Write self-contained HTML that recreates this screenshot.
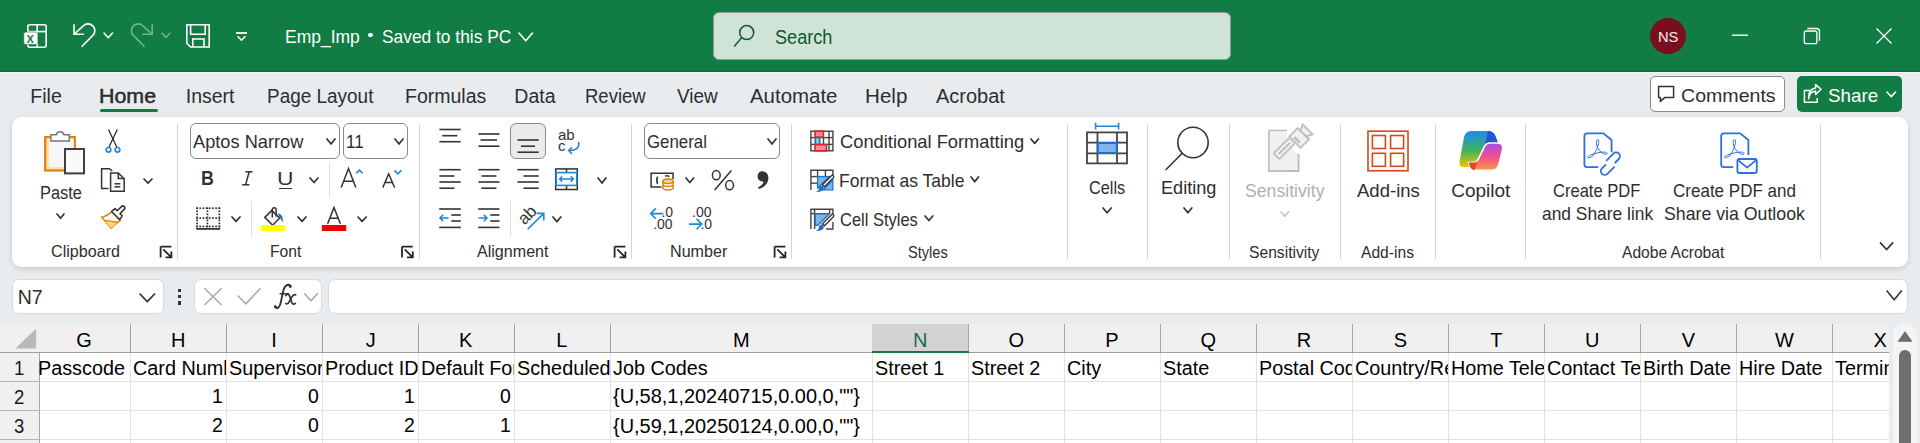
<!DOCTYPE html><html><head><meta charset="utf-8"><style>
html,body{margin:0;padding:0;width:1920px;height:443px;overflow:hidden;background:#E8ECEF}
body{position:relative;font-family:"Liberation Sans",sans-serif}
.t{position:absolute;white-space:nowrap;line-height:normal;transform-origin:0 0;font-family:"Liberation Sans",sans-serif}
.r{position:absolute;display:block}
</style></head><body>
<div class="r" style="left:0px;top:0px;width:1920px;height:72px;background:#117C43"></div>
<div class="r" style="left:0px;top:71px;width:1920px;height:1px;background:#0B6F38"></div>
<div class="r" style="left:0px;top:72px;width:1920px;height:1px;background:#F3F5F8"></div>
<div class="r" style="left:0px;top:73px;width:1920px;height:370px;background:#E8ECEF"></div>
<div class="r" style="left:713px;top:12px;width:518px;height:48px;background:#CFE3D6;border:1px solid #959595;border-radius:6px;box-sizing:border-box"></div>
<div class="t" style="left:774.78px;top:25.80px;font-size:20px;color:#0E5A2E;transform:scaleX(0.9067);">Search</div>
<div class="t" style="left:284.90px;top:25.91px;font-size:19px;color:#FFFFFF;transform:scaleX(0.9198);">Emp_Imp</div>
<div class="r" style="left:368.3px;top:33px;width:4.4px;height:4.4px;background:#fff;border-radius:50%"></div>
<div class="t" style="left:381.92px;top:25.91px;font-size:19px;color:#FFFFFF;transform:scaleX(0.9133);">Saved to this PC</div>
<div class="r" style="left:1650px;top:18px;width:36px;height:36px;background:#7A0E1F;border-radius:50%"></div>
<div class="t" style="left:1657.83px;top:27.97px;font-size:15.5px;color:#F4E9EC;transform:scaleX(0.9473);">NS</div>
<div class="t" style="left:30.33px;top:85.25px;font-size:19.5px;color:#2E2E2E;">File</div>
<div class="t" style="left:99.29px;top:85.25px;font-size:19.5px;color:#2E2E2E;transform:scaleX(1.0963);-webkit-text-stroke:0.45px #242424;">Home</div>
<div class="t" style="left:185.74px;top:85.25px;font-size:19.5px;color:#2E2E2E;">Insert</div>
<div class="t" style="left:266.98px;top:85.25px;font-size:19.5px;color:#2E2E2E;transform:scaleX(0.9719);">Page Layout</div>
<div class="t" style="left:405.04px;top:85.25px;font-size:19.5px;color:#2E2E2E;">Formulas</div>
<div class="t" style="left:514.34px;top:85.25px;font-size:19.5px;color:#2E2E2E;">Data</div>
<div class="t" style="left:585.22px;top:85.25px;font-size:19.5px;color:#2E2E2E;transform:scaleX(0.9487);">Review</div>
<div class="t" style="left:677.21px;top:85.25px;font-size:19.5px;color:#2E2E2E;transform:scaleX(0.9707);">View</div>
<div class="t" style="left:749.50px;top:85.25px;font-size:19.5px;color:#2E2E2E;transform:scaleX(1.0474);">Automate</div>
<div class="t" style="left:864.85px;top:85.25px;font-size:19.5px;color:#2E2E2E;transform:scaleX(1.0574);">Help</div>
<div class="t" style="left:936.30px;top:85.25px;font-size:19.5px;color:#2E2E2E;transform:scaleX(1.0256);">Acrobat</div>
<div class="r" style="left:100px;top:109px;width:58px;height:3px;background:#117C43;border-radius:2px"></div>
<div class="r" style="left:1650px;top:76px;width:135px;height:36px;background:#fff;border:1px solid #8a8a8a;border-radius:5px;box-sizing:border-box"></div>
<div class="t" style="left:1681.02px;top:84.66px;font-size:18.5px;color:#2E2E2E;transform:scaleX(1.0583);">Comments</div>
<div class="r" style="left:1797px;top:76px;width:105px;height:36px;background:#117C43;border-radius:5px"></div>
<div class="t" style="left:1827.75px;top:84.66px;font-size:18.5px;color:#fff;transform:scaleX(1.0160);">Share</div>
<div class="r" style="left:12px;top:117px;width:1896px;height:150px;background:#fff;border-radius:9px;box-shadow:0 2px 5px rgba(0,0,0,0.15)"></div>
<div class="r" style="left:177px;top:124px;width:1px;height:135px;background:#D4D4D4"></div>
<div class="r" style="left:419px;top:124px;width:1px;height:135px;background:#D4D4D4"></div>
<div class="r" style="left:631px;top:124px;width:1px;height:135px;background:#D4D4D4"></div>
<div class="r" style="left:791px;top:124px;width:1px;height:135px;background:#D4D4D4"></div>
<div class="r" style="left:1067px;top:124px;width:1px;height:135px;background:#D4D4D4"></div>
<div class="r" style="left:1147px;top:124px;width:1px;height:135px;background:#D4D4D4"></div>
<div class="r" style="left:1229px;top:124px;width:1px;height:135px;background:#D4D4D4"></div>
<div class="r" style="left:1340px;top:124px;width:1px;height:135px;background:#D4D4D4"></div>
<div class="r" style="left:1435px;top:124px;width:1px;height:135px;background:#D4D4D4"></div>
<div class="r" style="left:1525px;top:124px;width:1px;height:135px;background:#D4D4D4"></div>
<div class="r" style="left:1820px;top:124px;width:1px;height:135px;background:#D4D4D4"></div>
<div class="t" style="left:50.69px;top:241.87px;font-size:16.5px;color:#2E2E2E;transform:scaleX(0.9764);">Clipboard</div>
<div class="t" style="left:269.75px;top:241.87px;font-size:16.5px;color:#2E2E2E;transform:scaleX(0.9494);">Font</div>
<div class="t" style="left:477.40px;top:241.87px;font-size:16.5px;color:#2E2E2E;transform:scaleX(0.9746);">Alignment</div>
<div class="t" style="left:669.71px;top:241.87px;font-size:16.5px;color:#2E2E2E;transform:scaleX(0.9757);">Number</div>
<div class="t" style="left:907.84px;top:243.07px;font-size:16.5px;color:#2E2E2E;transform:scaleX(0.8845);">Styles</div>
<div class="t" style="left:1248.90px;top:243.07px;font-size:16.5px;color:#2E2E2E;transform:scaleX(0.9482);">Sensitivity</div>
<div class="t" style="left:1360.80px;top:243.07px;font-size:16.5px;color:#2E2E2E;transform:scaleX(0.9466);">Add-ins</div>
<div class="t" style="left:1621.80px;top:243.07px;font-size:16.5px;color:#2E2E2E;transform:scaleX(0.9449);">Adobe Acrobat</div>
<div class="t" style="left:39.89px;top:182.71px;font-size:18px;color:#2E2E2E;transform:scaleX(0.9076);">Paste</div>
<div class="t" style="left:1088.69px;top:177.71px;font-size:18px;color:#2E2E2E;transform:scaleX(0.9034);">Cells</div>
<div class="t" style="left:1160.55px;top:177.71px;font-size:18px;color:#2E2E2E;transform:scaleX(1.0061);">Editing</div>
<div class="t" style="left:1245.21px;top:180.11px;font-size:19px;color:#B0B0B0;transform:scaleX(0.9298);">Sensitivity</div>
<div class="t" style="left:1357.20px;top:180.11px;font-size:19px;color:#2E2E2E;transform:scaleX(0.9758);">Add-ins</div>
<div class="t" style="left:1451.25px;top:180.11px;font-size:19px;color:#2E2E2E;">Copilot</div>
<div class="t" style="left:1553.47px;top:180.11px;font-size:19px;color:#2E2E2E;transform:scaleX(0.8711);">Create PDF</div>
<div class="t" style="left:1541.70px;top:202.81px;font-size:19px;color:#2E2E2E;transform:scaleX(0.9152);">and Share link</div>
<div class="t" style="left:1672.55px;top:180.11px;font-size:19px;color:#2E2E2E;transform:scaleX(0.8957);">Create PDF and</div>
<div class="t" style="left:1663.60px;top:202.81px;font-size:19px;color:#2E2E2E;transform:scaleX(0.9328);">Share via Outlook</div>
<div class="r" style="left:190px;top:123px;width:150px;height:36px;background:#fff;border:1px solid #8a8a8a;border-radius:6px;box-sizing:border-box"></div>
<div class="t" style="left:193.30px;top:131.16px;font-size:18.5px;color:#2E2E2E;transform:scaleX(0.9847);">Aptos Narrow</div>
<div class="r" style="left:343px;top:123px;width:65px;height:36px;background:#fff;border:1px solid #8a8a8a;border-radius:6px;box-sizing:border-box"></div>
<div class="t" style="left:346.42px;top:131.16px;font-size:18.5px;color:#2E2E2E;transform:scaleX(0.9216);">11</div>
<div class="r" style="left:644px;top:123px;width:136px;height:36px;background:#fff;border:1px solid #8a8a8a;border-radius:6px;box-sizing:border-box"></div>
<div class="t" style="left:646.66px;top:131.16px;font-size:18.5px;color:#2E2E2E;transform:scaleX(0.9098);">General</div>
<div class="t" style="left:839.68px;top:131.16px;font-size:18.5px;color:#2E2E2E;transform:scaleX(0.9892);">Conditional Formatting</div>
<div class="t" style="left:839.20px;top:169.66px;font-size:18.5px;color:#2E2E2E;transform:scaleX(0.9487);">Format as Table</div>
<div class="t" style="left:839.78px;top:208.86px;font-size:18.5px;color:#2E2E2E;transform:scaleX(0.8900);">Cell Styles</div>
<div class="r" style="left:12px;top:279px;width:152px;height:35px;background:#fff;border:1px solid #DADADA;border-radius:6px;box-sizing:border-box"></div>
<div class="t" style="left:17.74px;top:286.35px;font-size:19.5px;color:#2E2E2E;">N7</div>
<div class="r" style="left:194px;top:279px;width:128px;height:35px;background:#fff;border:1px solid #DADADA;border-radius:7px;box-sizing:border-box"></div>
<div class="r" style="left:328px;top:279px;width:1580px;height:35px;background:#fff;border:1px solid #DADADA;border-radius:7px;box-sizing:border-box"></div>
<div class="r" style="left:0px;top:324px;width:1890px;height:119px;background:#fff"></div>
<div class="r" style="left:0px;top:324px;width:1890px;height:29px;background:#F0F0F0"></div>
<div class="r" style="left:0px;top:324px;width:40px;height:119px;background:#F0F0F0"></div>
<div class="r" style="left:130px;top:324px;width:1px;height:28px;background:#A6A6A6"></div>
<div class="r" style="left:226px;top:324px;width:1px;height:28px;background:#A6A6A6"></div>
<div class="r" style="left:322px;top:324px;width:1px;height:28px;background:#A6A6A6"></div>
<div class="r" style="left:418px;top:324px;width:1px;height:28px;background:#A6A6A6"></div>
<div class="r" style="left:514px;top:324px;width:1px;height:28px;background:#A6A6A6"></div>
<div class="r" style="left:610px;top:324px;width:1px;height:28px;background:#A6A6A6"></div>
<div class="r" style="left:872px;top:324px;width:1px;height:28px;background:#A6A6A6"></div>
<div class="r" style="left:872px;top:324px;width:96px;height:28px;background:#D2D2D2"></div>
<div class="r" style="left:968px;top:324px;width:1px;height:28px;background:#A6A6A6"></div>
<div class="r" style="left:1064px;top:324px;width:1px;height:28px;background:#A6A6A6"></div>
<div class="r" style="left:1160px;top:324px;width:1px;height:28px;background:#A6A6A6"></div>
<div class="r" style="left:1256px;top:324px;width:1px;height:28px;background:#A6A6A6"></div>
<div class="r" style="left:1352px;top:324px;width:1px;height:28px;background:#A6A6A6"></div>
<div class="r" style="left:1448px;top:324px;width:1px;height:28px;background:#A6A6A6"></div>
<div class="r" style="left:1544px;top:324px;width:1px;height:28px;background:#A6A6A6"></div>
<div class="r" style="left:1640px;top:324px;width:1px;height:28px;background:#A6A6A6"></div>
<div class="r" style="left:1736px;top:324px;width:1px;height:28px;background:#A6A6A6"></div>
<div class="r" style="left:1832px;top:324px;width:1px;height:28px;background:#A6A6A6"></div>
<div class="r" style="left:1928px;top:324px;width:1px;height:28px;background:#A6A6A6"></div>
<div class="r" style="left:0px;top:352px;width:1890px;height:1px;background:#9E9E9E"></div>
<div class="r" style="left:872px;top:351px;width:97px;height:2px;background:#117C43"></div>
<div class="r" style="left:39px;top:352px;width:1px;height:91px;background:#A6A6A6"></div>
<div class="r" style="left:0px;top:381px;width:40px;height:1px;background:#B4B4B4"></div>
<div class="r" style="left:40px;top:381px;width:1850px;height:1px;background:#E1E1E1"></div>
<div class="r" style="left:0px;top:410px;width:40px;height:1px;background:#B4B4B4"></div>
<div class="r" style="left:40px;top:410px;width:1850px;height:1px;background:#E1E1E1"></div>
<div class="r" style="left:0px;top:439px;width:40px;height:1px;background:#B4B4B4"></div>
<div class="r" style="left:40px;top:439px;width:1850px;height:1px;background:#E1E1E1"></div>
<div class="r" style="left:0px;top:468px;width:40px;height:1px;background:#B4B4B4"></div>
<div class="r" style="left:40px;top:468px;width:1850px;height:1px;background:#E1E1E1"></div>
<div class="r" style="left:130px;top:353px;width:1px;height:90px;background:#E1E1E1"></div>
<div class="r" style="left:226px;top:353px;width:1px;height:90px;background:#E1E1E1"></div>
<div class="r" style="left:322px;top:353px;width:1px;height:90px;background:#E1E1E1"></div>
<div class="r" style="left:418px;top:353px;width:1px;height:90px;background:#E1E1E1"></div>
<div class="r" style="left:514px;top:353px;width:1px;height:90px;background:#E1E1E1"></div>
<div class="r" style="left:610px;top:353px;width:1px;height:90px;background:#E1E1E1"></div>
<div class="r" style="left:872px;top:353px;width:1px;height:90px;background:#E1E1E1"></div>
<div class="r" style="left:968px;top:353px;width:1px;height:90px;background:#E1E1E1"></div>
<div class="r" style="left:1064px;top:353px;width:1px;height:90px;background:#E1E1E1"></div>
<div class="r" style="left:1160px;top:353px;width:1px;height:90px;background:#E1E1E1"></div>
<div class="r" style="left:1256px;top:353px;width:1px;height:90px;background:#E1E1E1"></div>
<div class="r" style="left:1352px;top:353px;width:1px;height:90px;background:#E1E1E1"></div>
<div class="r" style="left:1448px;top:353px;width:1px;height:90px;background:#E1E1E1"></div>
<div class="r" style="left:1544px;top:353px;width:1px;height:90px;background:#E1E1E1"></div>
<div class="r" style="left:1640px;top:353px;width:1px;height:90px;background:#E1E1E1"></div>
<div class="r" style="left:1736px;top:353px;width:1px;height:90px;background:#E1E1E1"></div>
<div class="r" style="left:1832px;top:353px;width:1px;height:90px;background:#E1E1E1"></div>
<div class="r" style="left:1928px;top:353px;width:1px;height:90px;background:#E1E1E1"></div>
<div class="r" style="left:1889px;top:324px;width:31px;height:119px;background:#E8ECEF"></div>
<div class="t" style="left:76.18px;top:328.90px;font-size:20px;color:#000;">G</div>
<div class="t" style="left:171.08px;top:328.90px;font-size:20px;color:#000;">H</div>
<div class="t" style="left:271.30px;top:328.90px;font-size:20px;color:#000;">I</div>
<div class="t" style="left:365.81px;top:328.90px;font-size:20px;color:#000;">J</div>
<div class="t" style="left:458.94px;top:328.90px;font-size:20px;color:#000;">K</div>
<div class="t" style="left:556.17px;top:328.90px;font-size:20px;color:#000;">L</div>
<div class="t" style="left:733.03px;top:328.90px;font-size:20px;color:#000;">M</div>
<div class="t" style="left:913.08px;top:328.90px;font-size:20px;color:#1E6B4A;">N</div>
<div class="t" style="left:1008.59px;top:328.90px;font-size:20px;color:#000;">O</div>
<div class="t" style="left:1105.32px;top:328.90px;font-size:20px;color:#000;">P</div>
<div class="t" style="left:1200.59px;top:328.90px;font-size:20px;color:#000;">Q</div>
<div class="t" style="left:1296.75px;top:328.90px;font-size:20px;color:#000;">R</div>
<div class="t" style="left:1393.64px;top:328.90px;font-size:20px;color:#000;">S</div>
<div class="t" style="left:1490.18px;top:328.90px;font-size:20px;color:#000;">T</div>
<div class="t" style="left:1585.09px;top:328.90px;font-size:20px;color:#000;">U</div>
<div class="t" style="left:1681.68px;top:328.90px;font-size:20px;color:#000;">V</div>
<div class="t" style="left:1775.02px;top:328.90px;font-size:20px;color:#000;">W</div>
<div class="t" style="left:1873.61px;top:328.90px;font-size:20px;color:#000;">X</div>
<div class="t" style="left:13.88px;top:357.05px;font-size:19.5px;color:#1a1a1a;transform:scaleX(0.9500);">1</div>
<div class="t" style="left:14.16px;top:386.05px;font-size:19.5px;color:#1a1a1a;transform:scaleX(0.9500);">2</div>
<div class="t" style="left:14.16px;top:415.05px;font-size:19.5px;color:#1a1a1a;transform:scaleX(0.9500);">3</div>
<div class="t" style="left:14.25px;top:444.05px;font-size:19.5px;color:#1a1a1a;transform:scaleX(0.9500);">4</div>
<div class="r" style="left:39px;top:353px;width:91px;height:28px;overflow:hidden"><div class="t" style="left:-0.88px;top:3.90px;font-size:20px;color:#000;transform:scaleX(0.9900);">Passcode</div></div>
<div class="r" style="left:130px;top:353px;width:96px;height:28px;overflow:hidden"><div class="t" style="left:3.40px;top:3.90px;font-size:20px;color:#000;transform:scaleX(0.9900);">Card Number</div></div>
<div class="r" style="left:226px;top:353px;width:96px;height:28px;overflow:hidden"><div class="t" style="left:3.40px;top:3.90px;font-size:20px;color:#000;transform:scaleX(0.9900);">Supervisor</div></div>
<div class="r" style="left:322px;top:353px;width:96px;height:28px;overflow:hidden"><div class="t" style="left:3.40px;top:3.90px;font-size:20px;color:#000;transform:scaleX(0.9900);">Product ID</div></div>
<div class="r" style="left:418px;top:353px;width:96px;height:28px;overflow:hidden"><div class="t" style="left:3.40px;top:3.90px;font-size:20px;color:#000;transform:scaleX(0.9900);">Default Form</div></div>
<div class="r" style="left:514px;top:353px;width:96px;height:28px;overflow:hidden"><div class="t" style="left:3.40px;top:3.90px;font-size:20px;color:#000;transform:scaleX(0.9900);">Scheduled</div></div>
<div class="r" style="left:610px;top:353px;width:262px;height:28px;overflow:hidden"><div class="t" style="left:3.40px;top:3.90px;font-size:20px;color:#000;transform:scaleX(0.9900);">Job Codes</div></div>
<div class="r" style="left:872px;top:353px;width:96px;height:28px;overflow:hidden"><div class="t" style="left:3.40px;top:3.90px;font-size:20px;color:#000;transform:scaleX(0.9900);">Street 1</div></div>
<div class="r" style="left:968px;top:353px;width:96px;height:28px;overflow:hidden"><div class="t" style="left:3.40px;top:3.90px;font-size:20px;color:#000;transform:scaleX(0.9900);">Street 2</div></div>
<div class="r" style="left:1064px;top:353px;width:96px;height:28px;overflow:hidden"><div class="t" style="left:3.40px;top:3.90px;font-size:20px;color:#000;transform:scaleX(0.9900);">City</div></div>
<div class="r" style="left:1160px;top:353px;width:96px;height:28px;overflow:hidden"><div class="t" style="left:3.40px;top:3.90px;font-size:20px;color:#000;transform:scaleX(0.9900);">State</div></div>
<div class="r" style="left:1256px;top:353px;width:96px;height:28px;overflow:hidden"><div class="t" style="left:3.40px;top:3.90px;font-size:20px;color:#000;transform:scaleX(0.9900);">Postal Code</div></div>
<div class="r" style="left:1352px;top:353px;width:96px;height:28px;overflow:hidden"><div class="t" style="left:3.40px;top:3.90px;font-size:20px;color:#000;transform:scaleX(0.9900);">Country/Region</div></div>
<div class="r" style="left:1448px;top:353px;width:96px;height:28px;overflow:hidden"><div class="t" style="left:3.40px;top:3.90px;font-size:20px;color:#000;transform:scaleX(0.9900);">Home Telephone</div></div>
<div class="r" style="left:1544px;top:353px;width:96px;height:28px;overflow:hidden"><div class="t" style="left:3.40px;top:3.90px;font-size:20px;color:#000;transform:scaleX(0.9900);">Contact Telephone</div></div>
<div class="r" style="left:1640px;top:353px;width:96px;height:28px;overflow:hidden"><div class="t" style="left:3.40px;top:3.90px;font-size:20px;color:#000;transform:scaleX(0.9900);">Birth Date</div></div>
<div class="r" style="left:1736px;top:353px;width:96px;height:28px;overflow:hidden"><div class="t" style="left:3.40px;top:3.90px;font-size:20px;color:#000;transform:scaleX(0.9900);">Hire Date</div></div>
<div class="r" style="left:1832px;top:353px;width:57px;height:28px;overflow:hidden"><div class="t" style="left:3.40px;top:3.90px;font-size:20px;color:#000;transform:scaleX(0.9900);">Termination</div></div>
<div class="r" style="left:130px;top:382px;width:96px;height:28px;overflow:hidden"><div class="t" style="left:82.31px;top:2.90px;font-size:20px;color:#000;transform:scaleX(0.9700);">1</div></div>
<div class="r" style="left:226px;top:382px;width:96px;height:28px;overflow:hidden"><div class="t" style="left:82.11px;top:2.90px;font-size:20px;color:#000;transform:scaleX(0.9700);">0</div></div>
<div class="r" style="left:322px;top:382px;width:96px;height:28px;overflow:hidden"><div class="t" style="left:82.31px;top:2.90px;font-size:20px;color:#000;transform:scaleX(0.9700);">1</div></div>
<div class="r" style="left:418px;top:382px;width:96px;height:28px;overflow:hidden"><div class="t" style="left:82.11px;top:2.90px;font-size:20px;color:#000;transform:scaleX(0.9700);">0</div></div>
<div class="r" style="left:130px;top:411px;width:96px;height:28px;overflow:hidden"><div class="t" style="left:82.40px;top:3.10px;font-size:20px;color:#000;transform:scaleX(0.9700);">2</div></div>
<div class="r" style="left:226px;top:411px;width:96px;height:28px;overflow:hidden"><div class="t" style="left:82.11px;top:3.10px;font-size:20px;color:#000;transform:scaleX(0.9700);">0</div></div>
<div class="r" style="left:322px;top:411px;width:96px;height:28px;overflow:hidden"><div class="t" style="left:82.40px;top:3.10px;font-size:20px;color:#000;transform:scaleX(0.9700);">2</div></div>
<div class="r" style="left:418px;top:411px;width:96px;height:28px;overflow:hidden"><div class="t" style="left:82.31px;top:3.10px;font-size:20px;color:#000;transform:scaleX(0.9700);">1</div></div>
<div class="r" style="left:610px;top:382px;width:1px;height:1px"></div>
<div class="t" style="left:612.70px;top:384.45px;font-size:20.5px;color:#000;transform:scaleX(0.9725);">{U,58,1,20240715,0.00,0,&quot;&quot;}</div>
<div class="t" style="left:612.70px;top:413.65px;font-size:20.5px;color:#000;transform:scaleX(0.9725);">{U,59,1,20250124,0.00,0,&quot;&quot;}</div>
<svg class="r" style="left:0;top:0" width="1920" height="443">
<g fill="none" stroke="#fff" stroke-width="1.6">
<rect x="27.8" y="24.8" width="18.4" height="22.4" rx="2"/>
<line x1="37.2" y1="24.8" x2="37.2" y2="47"/><line x1="28" y1="31.6" x2="46" y2="31.6"/>
</g>
<rect x="23.8" y="32" width="14" height="12.6" rx="2.2" fill="#fff" stroke="#117C43" stroke-width="0.6"/>
<text x="26.6" y="42.6" font-family="Liberation Sans" font-weight="700" font-size="11" fill="#117C43">X</text>
<g fill="none" stroke="#fff" stroke-width="1.6" stroke-linecap="butt">
<path d="M74,24.3 V34.2 H84"/>
<path d="M74.8,33.6 L83.3,25.8 A6.6,6.6 0 0 1 92.8,35.4 L81.6,46.8"/>
</g>
<g fill="none" stroke="#6FB48C" stroke-width="1.6" transform="translate(226.2,0) scale(-1,1)">
<path d="M74,24.3 V34.2 H84"/>
<path d="M74.8,33.6 L83.3,25.8 A6.6,6.6 0 0 1 92.8,35.4 L81.6,46.8"/>
</g>
<g fill="none" stroke="#fff" stroke-width="1.6">
<path d="M186.8,24.8 H209.2 V47 H190.6 L186.8,43.2 Z"/>
<path d="M190.6,24.8 V34.3 H205.2 V24.8"/>
<path d="M192.8,47 V39 H204 V47"/>
<line x1="236" y1="33" x2="247" y2="33" stroke-width="1.8"/>
<path d="M237.6,36.2 L241.5,40.2 L245.4,36.2" stroke-width="1.6"/>
<line x1="1732" y1="35.2" x2="1748" y2="35.2" stroke-width="1.4"/>
<rect x="1804.3" y="31" width="12.6" height="12.6" rx="2.2" stroke-width="1.3"/>
<path d="M1807.3,28.5 H1816.5 A3,3 0 0 1 1819.5,31.5 V40.7" stroke-width="1.3"/>
<path d="M1876.5,28.5 L1891.5,43.5 M1891.5,28.5 L1876.5,43.5" stroke-width="1.4"/>
</g>
<g fill="none" stroke="#0E5A2E" stroke-width="1.5">
<circle cx="746.7" cy="32.6" r="7"/>
<line x1="741.6" y1="37.7" x2="734.2" y2="46.4"/>
</g>
</svg>
<svg class="r" style="left:102px;top:31px" width="12.5" height="8.799999999999997"><path d="M2,2 L6.25,6.799999999999997 L10.5,2" fill="none" stroke="#fff" stroke-width="1.5" stroke-linecap="round" stroke-linejoin="round"/></svg>
<svg class="r" style="left:159.5px;top:31.200000000000003px" width="12.0" height="8.399999999999999"><path d="M2,2 L6.0,6.399999999999999 L10.0,2" fill="none" stroke="#6FB48C" stroke-width="1.5" stroke-linecap="round" stroke-linejoin="round"/></svg>
<svg class="r" style="left:516.5px;top:30.5px" width="17.5" height="11.799999999999997"><path d="M2,2 L8.75,9.799999999999997 L15.5,2" fill="none" stroke="#fff" stroke-width="1.6" stroke-linecap="round" stroke-linejoin="round"/></svg>
<svg class="r" style="left:0;top:0" width="1920" height="443">
<rect x="45.2" y="137.1" width="29.6" height="33.4" fill="#FBE0A0" stroke="#E07F13" stroke-width="2.2"/>
<rect x="48.8" y="138.6" width="24.8" height="28.4" fill="#F7F7F7"/>
<path d="M50.9,141 V134.8 H56.2 A4,4 0 0 1 64,134.8 H69.3 V141 Z" fill="#fff" stroke="#777" stroke-width="1.5"/>
<rect x="65" y="149" width="19" height="24.4" fill="#FAFAFA" stroke="#404040" stroke-width="2"/>
<g stroke="#262626" stroke-width="1.25" fill="none">
<line x1="108.5" y1="129.4" x2="116.7" y2="147"/><line x1="117.3" y1="129.4" x2="109" y2="147"/>
</g>
<g stroke="#1E88D4" stroke-width="1.7" fill="#fff">
<circle cx="108.5" cy="149.8" r="2.3"/><circle cx="117.5" cy="149.8" r="2.3"/>
</g>
<g stroke="#333" stroke-width="1.5" fill="none">
<path d="M108.5,188.4 H101.6 V168.7 H109.4 L112.2,170.8"/>
<path d="M110.6,191.2 V173 H118.3 L124.2,178.8 V191.2 Z" fill="#FAFAFA"/>
<path d="M118.3,173 V178.6 H124.2"/>
<line x1="114.6" y1="183.8" x2="120.3" y2="183.8"/><line x1="114.6" y1="186.8" x2="120.3" y2="186.8"/>
</g>
<path d="M111.8,211.8 Q106,216.2 101.6,217.3 L111.3,228.3 Q115.2,223.8 120.5,220.4 Z" fill="#F8F8F8" stroke="#E07F13" stroke-width="1.5" stroke-linejoin="round"/>
<path d="M104.5,220.6 L111.3,228.3 L117.2,222.3 Z" fill="#FCD77F"/>
<path d="M104.3,220.3 L117.5,222.2" stroke="#E07F13" stroke-width="1.2" fill="none"/>
<path d="M111.7,211.4 L115.0,208.6 L117.2,210.8 L121.4,206.6 A1.6,1.6 0 0 1 124.2,209.4 L120,213.6 L122.2,215.8 L119.6,219.6 Z" fill="#fff" stroke="#333" stroke-width="1.5" stroke-linejoin="round"/>
<path d="M160.6,246.6 V257.4 M160.6,246.6 H171.4 M163.3,249.3 L171.4,257.4 M171.4,251.6 V257.4 H165.6" stroke="#262626" stroke-width="1.8" fill="none"/>
</svg>
<svg class="r" style="left:142.3px;top:176.5px" width="12.0" height="8.099999999999994"><path d="M2,2 L6.0,6.099999999999994 L10.0,2" fill="none" stroke="#333" stroke-width="1.7" stroke-linecap="round" stroke-linejoin="round"/></svg>
<svg class="r" style="left:55px;top:211.5px" width="11" height="8.300000000000011"><path d="M2,2 L5.5,6.300000000000011 L9,2" fill="none" stroke="#333" stroke-width="1.7" stroke-linecap="round" stroke-linejoin="round"/></svg>
<div class="t" style="left:201.44px;top:167.20px;font-size:20px;color:#333;font-weight:700;transform:scaleX(0.8934);">B</div>
<svg class="r" style="left:0;top:0" width="1920" height="443"><path d="M245.4,171.8 H252.6 M249.2,171.8 L245.6,184.8 M242.2,184.8 H249.4" stroke="#333" stroke-width="1.5" fill="none"/></svg>
<div class="t" style="left:277.29px;top:168.11px;font-size:19px;color:#333;transform:scaleX(1.2004);">U</div>
<div class="r" style="left:278.5px;top:187.6px;width:13.5px;height:1.6px;background:#333"></div>
<svg class="r" style="left:308.3px;top:176.3px" width="12.0" height="8.5"><path d="M2,2 L6.0,6.5 L10.0,2" fill="none" stroke="#333" stroke-width="1.7" stroke-linecap="round" stroke-linejoin="round"/></svg>
<div class="r" style="left:329px;top:162px;width:1px;height:36px;background:#E0E0E0"></div>
<div class="r" style="left:251px;top:201px;width:1px;height:36px;background:#E0E0E0"></div>
<svg class="r" style="left:0;top:0" width="1920" height="443">
<g stroke="#333" stroke-width="1.5" fill="none">
<path d="M341.2,187.6 L348.5,168.6 L355.8,187.6 M343.8,181.2 H353.2"/>
<path d="M382.8,187.6 L388.7,173.8 L394.6,187.6 M384.8,182.4 H392.6"/>
</g>
<g stroke="#1E88D4" stroke-width="1.6" fill="none">
<path d="M356.2,173.3 L359.4,170.2 L362.6,173.3"/>
<path d="M394.4,170.4 L397.9,173.8 L401.4,170.4"/>
</g>
<g fill="#333">
<rect x="196.20" y="207.4" width="1.7" height="1.7"/><rect x="196.20" y="225.6" width="1.7" height="1.7"/><rect x="196.20" y="217.2" width="1.7" height="1.7"/><rect x="199.38" y="207.4" width="1.7" height="1.7"/><rect x="199.38" y="225.6" width="1.7" height="1.7"/><rect x="199.38" y="217.2" width="1.7" height="1.7"/><rect x="202.56" y="207.4" width="1.7" height="1.7"/><rect x="202.56" y="225.6" width="1.7" height="1.7"/><rect x="202.56" y="217.2" width="1.7" height="1.7"/><rect x="205.74" y="207.4" width="1.7" height="1.7"/><rect x="205.74" y="225.6" width="1.7" height="1.7"/><rect x="205.74" y="217.2" width="1.7" height="1.7"/><rect x="208.92" y="207.4" width="1.7" height="1.7"/><rect x="208.92" y="225.6" width="1.7" height="1.7"/><rect x="208.92" y="217.2" width="1.7" height="1.7"/><rect x="212.10" y="207.4" width="1.7" height="1.7"/><rect x="212.10" y="225.6" width="1.7" height="1.7"/><rect x="212.10" y="217.2" width="1.7" height="1.7"/><rect x="215.28" y="207.4" width="1.7" height="1.7"/><rect x="215.28" y="225.6" width="1.7" height="1.7"/><rect x="215.28" y="217.2" width="1.7" height="1.7"/><rect x="218.46" y="207.4" width="1.7" height="1.7"/><rect x="218.46" y="225.6" width="1.7" height="1.7"/><rect x="218.46" y="217.2" width="1.7" height="1.7"/><rect x="196.2" y="207.40" width="1.7" height="1.7"/><rect x="218.5" y="207.40" width="1.7" height="1.7"/><rect x="206.6" y="207.40" width="1.7" height="1.7"/><rect x="196.2" y="210.43" width="1.7" height="1.7"/><rect x="218.5" y="210.43" width="1.7" height="1.7"/><rect x="206.6" y="210.43" width="1.7" height="1.7"/><rect x="196.2" y="213.46" width="1.7" height="1.7"/><rect x="218.5" y="213.46" width="1.7" height="1.7"/><rect x="206.6" y="213.46" width="1.7" height="1.7"/><rect x="196.2" y="216.49" width="1.7" height="1.7"/><rect x="218.5" y="216.49" width="1.7" height="1.7"/><rect x="206.6" y="216.49" width="1.7" height="1.7"/><rect x="196.2" y="219.52" width="1.7" height="1.7"/><rect x="218.5" y="219.52" width="1.7" height="1.7"/><rect x="206.6" y="219.52" width="1.7" height="1.7"/><rect x="196.2" y="222.55" width="1.7" height="1.7"/><rect x="218.5" y="222.55" width="1.7" height="1.7"/><rect x="206.6" y="222.55" width="1.7" height="1.7"/><rect x="196.2" y="225.58" width="1.7" height="1.7"/><rect x="218.5" y="225.58" width="1.7" height="1.7"/><rect x="206.6" y="225.58" width="1.7" height="1.7"/>
<rect x="196.2" y="228" width="24" height="1.8"/>
</g>
<path d="M264.8,217.4 L271.8,210.4 L279.6,218.2 L272.6,225.2 Z" fill="#F6F6F6" stroke="#333" stroke-width="1.5" stroke-linejoin="round"/>
<path d="M272.3,217.6 V209.6 A1.9,1.9 0 0 1 276.1,209.6 V216.4" fill="none" stroke="#333" stroke-width="1.5"/>
<path d="M277.4,213.2 Q283.6,213.4 282.9,222.4 Q280.2,218.6 277.4,213.2 Z" fill="#1E6FC4"/>
<rect x="260.9" y="225" width="24.2" height="6" fill="#FFFF00"/>
<path d="M327.6,223.8 L334.0,207.6 L340.4,223.8 M329.8,218.2 H338.2" stroke="#333" stroke-width="1.5" fill="none"/>
<rect x="321.9" y="225" width="24.3" height="6" fill="#F00000"/>
<path d="M402,246.6 V257.4 M402,246.6 H412.8 M404.7,249.3 L412.8,257.4 M412.8,251.6 V257.4 H407" stroke="#262626" stroke-width="1.8" fill="none"/>
</svg>
<svg class="r" style="left:230.2px;top:215.4px" width="12.0" height="8.400000000000006"><path d="M2,2 L6.0,6.400000000000006 L10.0,2" fill="none" stroke="#333" stroke-width="1.7" stroke-linecap="round" stroke-linejoin="round"/></svg>
<svg class="r" style="left:295.6px;top:215.4px" width="12.0" height="8.400000000000006"><path d="M2,2 L6.0,6.400000000000006 L10.0,2" fill="none" stroke="#333" stroke-width="1.7" stroke-linecap="round" stroke-linejoin="round"/></svg>
<svg class="r" style="left:356.2px;top:215.4px" width="12.199999999999989" height="8.400000000000006"><path d="M2,2 L6.099999999999994,6.400000000000006 L10.199999999999989,2" fill="none" stroke="#333" stroke-width="1.7" stroke-linecap="round" stroke-linejoin="round"/></svg>
<svg class="r" style="left:325.2px;top:137px" width="12.0" height="9"><path d="M2,2 L6.0,7 L10.0,2" fill="none" stroke="#333" stroke-width="1.7" stroke-linecap="round" stroke-linejoin="round"/></svg>
<svg class="r" style="left:393px;top:137px" width="12" height="9"><path d="M2,2 L6.0,7 L10,2" fill="none" stroke="#333" stroke-width="1.7" stroke-linecap="round" stroke-linejoin="round"/></svg>
<div class="r" style="left:510px;top:123px;width:36px;height:36px;background:#EBEBEB;border:1px solid #8a8a8a;border-radius:6px;box-sizing:border-box"></div>
<svg class="r" style="left:0;top:0" width="1920" height="443"><g stroke="#333" stroke-width="1.6"><line x1="439.4" y1="129.5" x2="460.7" y2="129.5"/><line x1="442.3" y1="135.7" x2="457.4" y2="135.7"/><line x1="439.4" y1="141.7" x2="460.7" y2="141.7"/></g><g stroke="#333" stroke-width="1.6"><line x1="478.4" y1="134" x2="499.5" y2="134"/><line x1="480.5" y1="140" x2="497" y2="140"/><line x1="478.4" y1="146.2" x2="499.5" y2="146.2"/></g><g stroke="#333" stroke-width="1.6"><line x1="517.5" y1="140" x2="538.7" y2="140"/><line x1="521" y1="146.2" x2="535" y2="146.2"/><line x1="517.5" y1="152.2" x2="538.7" y2="152.2"/></g><g stroke="#333" stroke-width="1.6"><line x1="439.4" y1="169.7" x2="460.7" y2="169.7"/><line x1="439.4" y1="176" x2="454.4" y2="176"/><line x1="439.4" y1="182" x2="460.7" y2="182"/><line x1="439.4" y1="188.2" x2="454.4" y2="188.2"/></g><g stroke="#333" stroke-width="1.6"><line x1="478.4" y1="169.7" x2="499.5" y2="169.7"/><line x1="481.4" y1="176" x2="496.4" y2="176"/><line x1="478.4" y1="182" x2="499.5" y2="182"/><line x1="481.4" y1="188.2" x2="496.4" y2="188.2"/></g><g stroke="#333" stroke-width="1.6"><line x1="517.5" y1="169.7" x2="538.7" y2="169.7"/><line x1="523.5" y1="176" x2="538.7" y2="176"/><line x1="517.5" y1="182" x2="538.7" y2="182"/><line x1="523.5" y1="188.2" x2="538.7" y2="188.2"/></g><g stroke="#333" stroke-width="1.6"><line x1="439.2" y1="209" x2="460.8" y2="209"/><line x1="439.2" y1="227.4" x2="460.8" y2="227.4"/></g><g stroke="#333" stroke-width="1.6"><line x1="451.3" y1="215" x2="460.8" y2="215"/><line x1="451.3" y1="221" x2="460.8" y2="221"/></g><g stroke="#333" stroke-width="1.6"><line x1="478.2" y1="209" x2="499.5" y2="209"/><line x1="478.2" y1="227.4" x2="499.5" y2="227.4"/></g><g stroke="#333" stroke-width="1.6"><line x1="490.3" y1="215" x2="499.5" y2="215"/><line x1="490.3" y1="221" x2="499.5" y2="221"/></g>
<g stroke="#1E88D4" stroke-width="1.6" fill="none">
<path d="M440,218 H448.5 M443.2,214.8 L440,218 L443.2,221.2"/>
<path d="M478.5,218 H487 M483.8,214.8 L487,218 L483.8,221.2"/>
<path d="M578.6,141.8 Q580.2,150.6 568.6,150.6 M572,147.2 L568.6,150.6 L572,154"/>
<path d="M527.6,229.2 L543.6,213.6 M536.6,213.4 H543.8 V220.6"/>
</g>
<g stroke="#333" stroke-width="1.5" fill="none">
<rect x="555.7" y="168.9" width="21.6" height="20.6"/>
<line x1="566.5" y1="168.9" x2="566.5" y2="172.6"/><line x1="566.5" y1="185.6" x2="566.5" y2="189.5"/>
</g>
<rect x="556.2" y="172.6" width="20.6" height="12.8" fill="#fff" stroke="#1E88D4" stroke-width="1.6"/>
<path d="M559.6,179 H573.4 M562.2,176.4 L559.6,179 L562.2,181.6 M570.8,176.4 L573.4,179 L570.8,181.6" stroke="#1E88D4" stroke-width="1.5" fill="none"/>
<text x="558" y="139.8" font-family="Liberation Sans" font-size="15" fill="#333">ab</text>
<text x="558" y="151" font-family="Liberation Sans" font-size="15" fill="#333">c</text>
<text transform="translate(524.4,225.6) rotate(-45)" font-family="Liberation Sans" font-size="17" fill="#333">ab</text>
<path d="M614.6,246.6 V257.4 M614.6,246.6 H625.4 M617.3,249.3 L625.4,257.4 M625.4,251.6 V257.4 H619.6" stroke="#262626" stroke-width="1.8" fill="none"/>
</svg>
<div class="r" style="left:510px;top:201px;width:1px;height:36px;background:#E0E0E0"></div>
<svg class="r" style="left:596px;top:176px" width="12" height="9"><path d="M2,2 L6.0,7 L10,2" fill="none" stroke="#333" stroke-width="1.7" stroke-linecap="round" stroke-linejoin="round"/></svg>
<svg class="r" style="left:551.4px;top:215.2px" width="11.800000000000068" height="8.600000000000023"><path d="M2,2 L5.900000000000034,6.600000000000023 L9.800000000000068,2" fill="none" stroke="#333" stroke-width="1.7" stroke-linecap="round" stroke-linejoin="round"/></svg>
<svg class="r" style="left:765.6px;top:137px" width="12.0" height="9"><path d="M2,2 L6.0,7 L10.0,2" fill="none" stroke="#333" stroke-width="1.7" stroke-linecap="round" stroke-linejoin="round"/></svg>
<svg class="r" style="left:684.3px;top:176.3px" width="11.700000000000045" height="8.5"><path d="M2,2 L5.850000000000023,6.5 L9.700000000000045,2" fill="none" stroke="#333" stroke-width="1.7" stroke-linecap="round" stroke-linejoin="round"/></svg>
<svg class="r" style="left:0;top:0" width="1920" height="443">
<path d="M661.5,187 H651.1 V173.3 H673.1 V179" fill="none" stroke="#333" stroke-width="1.5"/>
<path d="M657.6,176.6 A2.6,5.2 0 0 0 657.6,184 M665,176.2 A3.2,2.4 0 0 1 669.2,176.6" fill="none" stroke="#333" stroke-width="1.5"/>
<path d="M662.9,181.4 V188.4 A5.4,2.4 0 0 0 673.1,188.4 V181.4" fill="#fff" stroke="#E07F13" stroke-width="1.5"/>
<ellipse cx="668" cy="181.2" rx="5.1" ry="2.3" fill="#FCD77F" stroke="#E07F13" stroke-width="1.5"/>
<path d="M662.9,185 A5.4,2.3 0 0 0 673.1,185" fill="none" stroke="#E07F13" stroke-width="1.5"/>
<g fill="none" stroke="#333" stroke-width="1.5">
<ellipse cx="716.3" cy="175.2" rx="3.9" ry="4.6"/>
<ellipse cx="729.6" cy="185.2" rx="3.9" ry="4.6"/>
<line x1="731.4" y1="170.4" x2="714.6" y2="190"/>
</g>
<path d="M762.2,171.2 C766.4,171.2 768.6,174.6 768.4,178.6 C768.2,183.6 764.6,187.4 758.8,189 L758,187.4 C761.6,185.8 763.2,183.8 763.6,181.8 C760,181.8 757.6,179.6 757.6,176.6 C757.6,173.4 759.6,171.2 762.2,171.2 Z" fill="#333"/>
<g stroke="#1E88D4" stroke-width="1.6" fill="none">
<path d="M650.6,213.6 H663.4 M655.8,208.4 L650.6,213.6 L655.8,218.8"/>
<path d="M689,224.1 H701.8 M696.6,218.9 L701.8,224.1 L696.6,229.3"/>
</g>
<g font-family="Liberation Sans" font-size="14" fill="#333">
<text x="661.4" y="217.2">.0</text><text x="653.2" y="229.4">.00</text>
<text x="692" y="217.2">.00</text><text x="700.4" y="229.4">.0</text>
</g>
<path d="M774.6,246.6 V257.4 M774.6,246.6 H785.4 M777.3,249.3 L785.4,257.4 M785.4,251.6 V257.4 H779.6" stroke="#262626" stroke-width="1.8" fill="none"/>
</svg>
<svg class="r" style="left:1029px;top:136.6px" width="11.400000000000091" height="8.400000000000006"><path d="M2,2 L5.7000000000000455,6.400000000000006 L9.400000000000091,2" fill="none" stroke="#333" stroke-width="1.7" stroke-linecap="round" stroke-linejoin="round"/></svg>
<svg class="r" style="left:969.3px;top:175px" width="11.5" height="8.599999999999994"><path d="M2,2 L5.75,6.599999999999994 L9.5,2" fill="none" stroke="#333" stroke-width="1.7" stroke-linecap="round" stroke-linejoin="round"/></svg>
<svg class="r" style="left:922.8px;top:214.3px" width="11.800000000000068" height="8.5"><path d="M2,2 L5.900000000000034,6.5 L9.800000000000068,2" fill="none" stroke="#333" stroke-width="1.7" stroke-linecap="round" stroke-linejoin="round"/></svg>
<svg class="r" style="left:0;top:0" width="1920" height="443">
<rect x="815" y="131.2" width="8.4" height="6" fill="#FF8C9A"/>
<rect x="815" y="144.8" width="11.4" height="6" fill="#FF8C9A"/>
<rect x="814.6" y="137.6" width="5.8" height="6.6" fill="#9BCBF0"/>
<g fill="none" stroke="#444" stroke-width="1.4">
<rect x="810.9" y="131.2" width="22" height="19.6"/>
<line x1="810.9" y1="137.6" x2="832.9" y2="137.6"/><line x1="810.9" y1="144.4" x2="832.9" y2="144.4"/>
<line x1="829" y1="131.2" x2="829" y2="150.8"/><line x1="823.5" y1="137.6" x2="823.5" y2="144.4"/>
</g>
<rect x="815" y="131.2" width="8.4" height="6" fill="none" stroke="#E0202A" stroke-width="1.6"/>
<rect x="815" y="144.6" width="11.4" height="6.2" fill="none" stroke="#E0202A" stroke-width="1.6"/>
<line x1="815.4" y1="137.8" x2="815.4" y2="144" stroke="#1E6FC4" stroke-width="1.6"/><line x1="819.6" y1="137.8" x2="819.6" y2="144" stroke="#1E6FC4" stroke-width="1.6"/>
<g fill="none" stroke="#444" stroke-width="1.4">
<path d="M810.9,190 V170.2 H832.9 V175"/>
<line x1="810.9" y1="176.6" x2="832.9" y2="176.6"/><line x1="810.9" y1="183.2" x2="817.6" y2="183.2"/>
<line x1="817.6" y1="170.2" x2="817.6" y2="176"/><line x1="825.4" y1="170.2" x2="825.4" y2="176"/>
</g>
<path d="M817.6,176.6 H829 L817.6,188 Z" fill="#7CB6EA" stroke="#1E6FC4" stroke-width="1.2"/>
<path d="M832.9,180 V190 H822.9 Z" fill="#7CB6EA" stroke="#1E6FC4" stroke-width="1.2"/>
<path d="M822.4,184.8 L831.4,175.8 A1.4,1.4 0 0 1 833.4,177.8 L824.4,186.8 Z" fill="#fff" stroke="#333" stroke-width="1.3"/>
<path d="M821.4,185.4 Q824.6,186.8 823.4,189.6 Q821.6,192.4 815.8,192 Q819.2,190.4 818.8,188.2 Q819.4,185.4 821.4,185.4 Z" fill="#1E6FC4"/>
<g fill="none" stroke="#444" stroke-width="1.4">
<path d="M810.9,229 V209.2 H832.9 V214"/><path d="M832.9,222 V229 H826"/>
<line x1="810.9" y1="213.6" x2="814.6" y2="213.6"/><line x1="814.6" y1="209.2" x2="814.6" y2="229"/>
<line x1="829.6" y1="209.2" x2="829.6" y2="213"/>
</g>
<path d="M815.2,213.8 H829.4 L817.8,225.4 H815.2 Z" fill="#7CB6EA" stroke="#1E6FC4" stroke-width="1.4"/>
<path d="M822.4,223.8 L831.4,214.8 A1.4,1.4 0 0 1 833.4,216.8 L824.4,225.8 Z" fill="#fff" stroke="#333" stroke-width="1.3"/>
<path d="M821.4,224.4 Q824.6,225.8 823.4,228.6 Q821.6,231.4 815.8,231 Q819.2,229.4 818.8,227.2 Q819.4,224.4 821.4,224.4 Z" fill="#1E6FC4"/>
<g fill="none" stroke="#444" stroke-width="1.8">
<rect x="1087" y="132.4" width="40" height="31"/>
<line x1="1087" y1="142.6" x2="1127" y2="142.6"/><line x1="1087" y1="153.3" x2="1127" y2="153.3"/>
<line x1="1097.5" y1="132.4" x2="1097.5" y2="163.4"/><line x1="1117" y1="132.4" x2="1117" y2="163.4"/>
</g>
<rect x="1097.8" y="143" width="19" height="10" fill="#7CB6EA" stroke="#1E6FC4" stroke-width="2"/>
<path d="M1095.6,126.2 H1118.6 M1095.6,122.8 V129.6 M1118.6,122.8 V129.6" stroke="#1E88D4" stroke-width="1.6" fill="none"/>
<g fill="none" stroke="#333" stroke-width="1.6">
<circle cx="1193" cy="142.5" r="15.2"/>
<line x1="1182.2" y1="153.3" x2="1165.6" y2="170"/>
</g>
<path d="M1269,130.6 H1287 M1269,130.6 V171 H1298.6 V154" fill="#F0F0F0" stroke="#BDBDBD" stroke-width="1.8"/>
<rect x="1269.8" y="131.4" width="17" height="38.8" fill="#F0F0F0"/>
<path d="M1287,130.6 L1297.5,141" stroke="#fff" stroke-width="0"/>
<g transform="translate(1286,146) rotate(-45)">
<rect x="-14" y="-3.5" width="22" height="8" rx="1" fill="#F0F0F0" stroke="#BDBDBD" stroke-width="1.8"/>
<rect x="-11" y="-0.5" width="16" height="2" fill="#BDBDBD"/>
</g>
<g transform="translate(1297,140) rotate(-45)">
<rect x="-3" y="-8" width="12" height="16" fill="#F0F0F0" stroke="#fff" stroke-width="2.5"/>
<rect x="-3" y="-8" width="12" height="16" fill="#F0F0F0" stroke="#BDBDBD" stroke-width="1.8"/>
<rect x="-1" y="-4" width="2.4" height="8" fill="#BDBDBD"/>
<path d="M9,-4 L15,-7 V7 L9,4 Z" fill="#F0F0F0" stroke="#BDBDBD" stroke-width="1.8"/>
</g>
<g fill="none" stroke="#D24A1A" stroke-width="1.6">
<rect x="1368" y="131.2" width="40" height="39.6"/>
<rect x="1372.4" y="135.5" width="13" height="13"/><rect x="1390.6" y="135.5" width="13" height="13"/>
<rect x="1372.4" y="153.3" width="13" height="13"/><rect x="1390.6" y="153.3" width="13" height="13"/>
</g>
<defs>
<linearGradient id="cpL" x1="0" y1="0" x2="0" y2="1"><stop offset="0" stop-color="#1A8CF0"/><stop offset="0.55" stop-color="#3FB35A"/><stop offset="1" stop-color="#F4C400"/></linearGradient>
<linearGradient id="cpR" x1="0" y1="0" x2="0" y2="1"><stop offset="0" stop-color="#A64DE8"/><stop offset="0.5" stop-color="#F0508C"/><stop offset="1" stop-color="#FF9A40"/></linearGradient>
</defs>
<path d="M1471,131 H1488 Q1493.5,131 1495.6,136.5 L1498,143 H1490 Q1486.4,143 1485,146.6 L1478.4,163.6 Q1477,167 1472.6,167 H1463.5 Q1458.6,167 1459.6,161 L1464,137.6 Q1465.4,131 1471,131 Z" fill="url(#cpL)"/>
<path d="M1488,131 Q1493.5,131 1495.6,136.5 L1498,143 H1490 Q1486.4,143 1485,146.6 L1484,149 Z" fill="#2050D0" opacity="0.9"/>
<path d="M1490,143 H1497.5 Q1503.8,143 1502.6,149.6 L1499,164.2 Q1497.6,170.4 1491,170.4 H1476 Q1471.4,170.4 1469.8,166 L1468.6,162.6 H1473 Q1477,162.6 1478.6,158.6 L1484.2,146.8 Q1486,143 1490,143 Z" fill="url(#cpR)" stroke="#fff" stroke-width="1.6"/>
<path d="M1468.6,162.6 H1473.4 Q1477,162.6 1478.4,159.4 L1474.6,170.2 Q1471.2,170 1469.8,166 Z" fill="#E34A2A"/>
<g fill="none" stroke="#2B6FE0" stroke-width="1.8" stroke-linejoin="round">
<path d="M1611.6,152.3 V140 L1603.4,133.4 H1587 Q1584.4,133.4 1584.4,136 V164.6 Q1584.4,167.2 1587,167.2 H1598.3"/>
<path d="M1748.4,155 V140 L1740.2,133.4 H1723.8 Q1721.2,133.4 1721.2,136 V164.6 Q1721.2,167.2 1723.8,167.2 H1733.2"/>
<path d="M1606.2,160.8 L1613.4,153.6 A3.2,3.2 0 0 1 1618.8,159 L1614.8,163"/>
<path d="M1614.6,166.6 L1607.4,173.8 A3.2,3.2 0 0 1 1602,168.4 L1606,164.4"/>
<rect x="1737.4" y="159" width="19.4" height="14" rx="2"/>
<path d="M1738.4,160.4 L1747.1,167.6 L1755.8,160.4"/>
</g>
<g transform="translate(1597.6,148.4)"><path d="M-4.6,7.2 C-7.4,9.4 -9.6,10.2 -9.8,8.8 C-10,7.4 -5.6,5.8 0.4,4.4 C5.6,3.2 9.6,3.6 9.6,5.2 C9.6,6.8 5.8,6 2.4,2.6 C-0.6,-0.4 -1.4,-4.6 -1.2,-7 C-1,-9.4 1,-9.6 1.2,-7.4 C1.4,-4.6 -0.6,1.6 -4.6,7.2 Z" fill="none" stroke="#2B6FE0" stroke-width="1"/></g>
<g transform="translate(1734.4,148.4)"><path d="M-4.6,7.2 C-7.4,9.4 -9.6,10.2 -9.8,8.8 C-10,7.4 -5.6,5.8 0.4,4.4 C5.6,3.2 9.6,3.6 9.6,5.2 C9.6,6.8 5.8,6 2.4,2.6 C-0.6,-0.4 -1.4,-4.6 -1.2,-7 C-1,-9.4 1,-9.6 1.2,-7.4 C1.4,-4.6 -0.6,1.6 -4.6,7.2 Z" fill="none" stroke="#2B6FE0" stroke-width="1"/></g>
<path d="M1880,242.4 L1886.6,249.6 L1893.2,242.4" fill="none" stroke="#333" stroke-width="1.6"/>
</svg>
<svg class="r" style="left:1100.6px;top:206.2px" width="12.200000000000045" height="8.800000000000011"><path d="M2,2 L6.100000000000023,6.800000000000011 L10.200000000000045,2" fill="none" stroke="#333" stroke-width="1.7" stroke-linecap="round" stroke-linejoin="round"/></svg>
<svg class="r" style="left:1181.8px;top:206.2px" width="11.799999999999955" height="8.800000000000011"><path d="M2,2 L5.899999999999977,6.800000000000011 L9.799999999999955,2" fill="none" stroke="#333" stroke-width="1.7" stroke-linecap="round" stroke-linejoin="round"/></svg>
<svg class="r" style="left:1278.6px;top:210px" width="11.600000000000136" height="8.199999999999989"><path d="M2,2 L5.800000000000068,6.199999999999989 L9.600000000000136,2" fill="none" stroke="#BDBDBD" stroke-width="1.5" stroke-linecap="round" stroke-linejoin="round"/></svg>
<svg class="r" style="left:0;top:0" width="1920" height="443">
<path d="M1658.6,86.6 H1673.6 V97.6 H1664.6 L1660.4,101.4 V97.6 H1658.6 Z" fill="none" stroke="#333" stroke-width="1.5" stroke-linejoin="round"/>
<g fill="none" stroke="#fff" stroke-width="1.5" stroke-linejoin="round">
<path d="M1810.4,90.4 H1804.4 V102.2 H1817.2 V98"/>
<path d="M1808.6,98.8 Q1809.6,91.6 1815.6,91 V94.6 L1821,89.2 L1815.6,84.6 V88 Q1808.4,88.8 1808.6,98.8 Z"/>
</g>
</svg>
<svg class="r" style="left:1884.8px;top:90.2px" width="12.600000000000136" height="8.599999999999994"><path d="M2,2 L6.300000000000068,6.599999999999994 L10.600000000000136,2" fill="none" stroke="#fff" stroke-width="1.6" stroke-linecap="round" stroke-linejoin="round"/></svg>
<svg class="r" style="left:138.4px;top:292.2px" width="18.599999999999994" height="11.600000000000023"><path d="M2,2 L9.299999999999997,9.600000000000023 L16.599999999999994,2" fill="none" stroke="#333" stroke-width="1.7" stroke-linecap="round" stroke-linejoin="round"/></svg>
<div class="r" style="left:177.6px;top:288.8px;width:3.2px;height:3.2px;background:#333"></div>
<div class="r" style="left:177.6px;top:295.2px;width:3.2px;height:3.2px;background:#333"></div>
<div class="r" style="left:177.6px;top:301.4px;width:3.2px;height:3.2px;background:#333"></div>
<svg class="r" style="left:0;top:0" width="1920" height="443">
<g stroke="#A8A8A8" stroke-width="1.5" fill="none">
<path d="M204.4,288.2 L221.6,305 M221.6,288.2 L204.4,305"/>
<path d="M237.6,295.4 L245.8,303.8 L260.6,288.2"/>
<path d="M304.2,293.2 L311,300.8 L317.8,293.2"/>
</g>
<path d="M1886.6,290.4 L1894.2,299.8 L1901.8,290.4" fill="none" stroke="#333" stroke-width="1.6"/>
</svg>
<svg class="r" style="left:0;top:0" width="1920" height="443"><g stroke="#333" fill="none" stroke-linecap="round">
<path d="M275.2,306.6 Q276,308.4 277.6,308 Q280,307.2 281.2,300.4 L283.2,291.2 Q284.6,285.2 288.4,284.8 Q290.6,284.8 290.4,286.6" stroke-width="1.9"/>
<path d="M280.2,293.8 H288.4" stroke-width="1.5"/>
<path d="M285.8,295.6 Q288.4,292.6 289.8,296.4 L291.6,302 Q292.8,305.4 295.4,303.4" stroke-width="1.7"/>
<path d="M295.6,294.8 Q293.6,293.8 291.4,297.6 L289.6,301.2 Q287.8,304.8 285.8,303.6" stroke-width="1.7"/>
</g><circle cx="275.4" cy="306.8" r="1.5" fill="#333"/><circle cx="290.2" cy="286.4" r="1.4" fill="#333"/></svg>
<div class="r" style="left:1893px;top:324px;width:24px;height:119px;background:#F4F4F4;border-radius:10px 10px 0 0"></div>
<svg class="r" style="left:0;top:0" width="1920" height="443"><path d="M1898.6,341.2 L1905,332 L1911.4,341.2 Z" fill="#6E6E6E" stroke="#6E6E6E" stroke-width="1.2" stroke-linejoin="round"/></svg>
<div class="r" style="left:1899px;top:349.6px;width:12px;height:100px;background:#6E6E6E;border-radius:6px"></div>
<svg class="r" style="left:0;top:0" width="1920" height="443"><path d="M15.4,348.6 L36.2,328.6 V348.6 Z" fill="#B9B9B9"/></svg>
</body></html>
